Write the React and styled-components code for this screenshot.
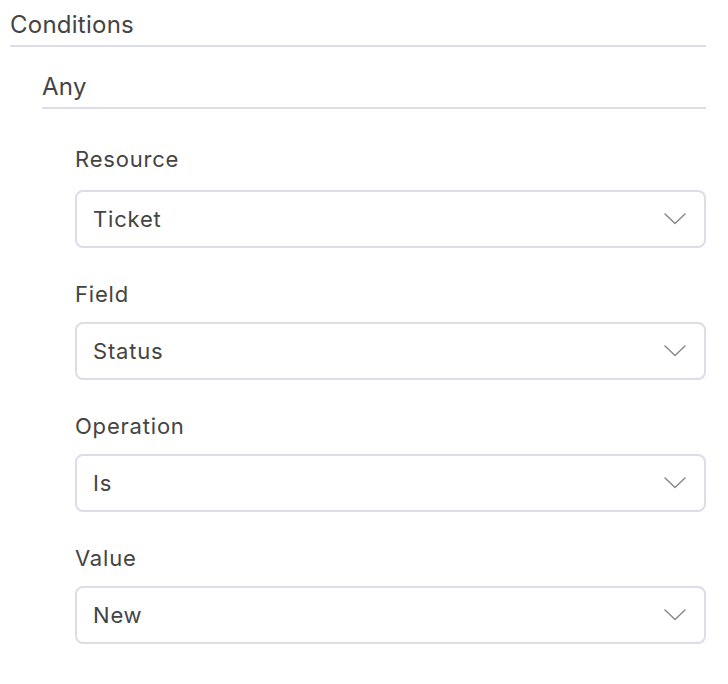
import React from "react";
import styled, { createGlobalStyle } from "styled-components";

const Global = createGlobalStyle`
  html, body { margin: 0; padding: 0; background: #ffffff; }
  body { font-family: Inter, "Noto Sans", sans-serif; color: #444444; }
`;

const Page = styled.div`
  padding: 10px 22px 0 10px;
`;

const Heading = styled.div`
  font-size: 24px;
  line-height: 30px;
  letter-spacing: 0.25px;
  color: #444444;
  padding-bottom: 5px;
  border-bottom: 2px solid #dcdde8;
`;

const Group = styled.div`
  margin-left: 32px;
  margin-top: 25px;
`;

const Fields = styled.div`
  margin-left: 33px;
  margin-top: 36px;
  display: flex;
  flex-direction: column;
  gap: 32px;
`;

const Field = styled.div`
  display: flex;
  flex-direction: column;
  gap: ${(p) => (p.$first ? 17 : 14)}px;
`;

const Label = styled.div`
  font-size: 22px;
  line-height: 28px;
  letter-spacing: 0.8px;
  color: #444444;
`;

const Select = styled.div`
  box-sizing: border-box;
  height: 58px;
  border: 2px solid #dcdde8;
  border-radius: 8px;
  display: flex;
  align-items: center;
  justify-content: space-between;
  padding: 0 18px 0 16px;
  font-size: 22px;
  letter-spacing: 0.8px;
  color: #444444;
`;

const Chevron = () => (
  <svg width="22" height="12" viewBox="0 0 22 12" fill="none">
    <path d="M1 1 L11 10.5 L21 1" stroke="#8a8a8a" strokeWidth="1.5" strokeLinecap="round" strokeLinejoin="round" />
  </svg>
);

const fields = [
  ["Resource", "Ticket"],
  ["Field", "Status"],
  ["Operation", "Is"],
  ["Value", "New"],
];

export default function App() {
  return (
    <>
      <Global />
      <Page>
        <Heading>Conditions</Heading>
        <Group>
          <Heading>Any</Heading>
          <Fields>
            {fields.map(([label, value], i) => (
              <Field key={label} $first={i === 0}>
                <Label>{label}</Label>
                <Select>
                  <span>{value}</span>
                  <Chevron />
                </Select>
              </Field>
            ))}
          </Fields>
        </Group>
      </Page>
    </>
  );
}
